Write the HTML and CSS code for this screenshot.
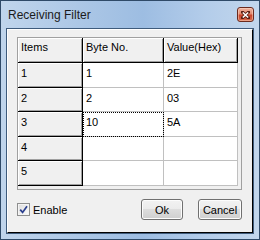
FILE: index.html
```html
<!DOCTYPE html>
<html lang="en">
<head>
    <meta charset="UTF-8">
    <title>Receiving Filter</title>
    <link rel="stylesheet" href="styles.css">
</head>
<body>
    <div class="window">
        <div class="title-bar">
            <span class="title">Receiving Filter</span>
            <div class="close-btn">
                <svg width="9" height="8" viewBox="0 0 9 8">
                    <path d="M1.5 1.2 L7.5 6.8 M7.5 1.2 L1.5 6.8" stroke="#5a1d10" stroke-width="3.2" stroke-linecap="square"/>
                    <path d="M1.8 1.5 L7.2 6.5 M7.2 1.5 L1.8 6.5" stroke="#fff" stroke-width="1.6"/>
                </svg>
            </div>
        </div>
        <div class="client-edge">
            <div class="client">
                <div class="grid-box">
                    <div class="grid">
                        <div class="cell head">Items</div>
                        <div class="cell head">Byte No.</div>
                        <div class="cell head">Value(Hex)</div>

                        <div class="cell row-head">1</div>
                        <div class="cell data">1</div>
                        <div class="cell data">2E</div>

                        <div class="cell row-head">2</div>
                        <div class="cell data">2</div>
                        <div class="cell data">03</div>

                        <div class="cell row-head">3</div>
                        <div class="cell data focused">10</div>
                        <div class="cell data">5A</div>

                        <div class="cell row-head">4</div>
                        <div class="cell data"></div>
                        <div class="cell data"></div>

                        <div class="cell row-head">5</div>
                        <div class="cell data"></div>
                        <div class="cell data"></div>
                    </div>
                </div>
                <div class="bottom-row">
                    <label class="check">
                        <span class="check-box">
                            <svg width="9" height="9" viewBox="0 0 9 9">
                                <path d="M1.2 4.6 L3.6 7.4 L8 1.2" fill="none" stroke="#2b3f8e" stroke-width="1.7"/>
                            </svg>
                        </span>
                        Enable
                    </label>
                    <div class="buttons">
                        <div class="btn ok">Ok</div>
                        <div class="btn cancel">Cancel</div>
                    </div>
                </div>
            </div>
        </div>
    </div>
</body>
</html>
```

FILE: styles.css
```css
body {
    margin: 0;
    padding: 0;
    font-family: "Liberation Sans", Arial, sans-serif;
    font-size: 11px;
    color: #000;
}

.window {
    width: 260px;
    height: 240px;
    box-sizing: border-box;
    border: 1px solid #2f4a68;
    padding: 0 5px 5px 5px;
    display: flex;
    flex-direction: column;
    background: linear-gradient(to right, #c0d5ec 0%, #a9c5e5 35%, #9dbde2 55%, #b4cdea 80%, #c2d6ec 100%);
}

.title-bar {
    height: 27px;
    display: flex;
    align-items: flex-start;
    justify-content: space-between;
}

.title {
    font-size: 12px;
    color: #1b1b1b;
    margin: 7px 0 0 2px;
}

.close-btn {
    width: 17px;
    height: 15px;
    box-sizing: border-box;
    margin-top: 6px;
    border: 1px solid #6b2a1e;
    border-radius: 3px;
    background: linear-gradient(#eeb3a0 0%, #e38a6f 45%, #c9432a 55%, #d76a4c 100%);
    box-shadow: inset 0 0 0 1px rgba(255, 220, 200, 0.5);
    display: flex;
    align-items: center;
    justify-content: center;
}

.client-edge {
    flex: 1;
    border: 1px solid #3e5b7c;
}

.client {
    height: 100%;
    box-sizing: border-box;
    border: 1px solid;
    border-color: #fff #000 #000 #fff;
    background: #f0f0f0;
    padding: 7px 10px 0 9px;
}

.grid-box {
    height: 153px;
    box-sizing: border-box;
    border: 1px solid #a0a0a0;
    background: #f0f0f0;
}

.grid {
    display: grid;
    grid-template-columns: 65px 81px 74px;
    grid-template-rows: 25px 25px 24px 25px 24px 25px;
}

.cell {
    box-sizing: border-box;
    border-right: 1px solid #c0c0c0;
    border-bottom: 1px solid #c0c0c0;
    padding: 4px 0 0 3px;
    white-space: nowrap;
}

.head,
.row-head {
    background: #f0f0f0;
    border-right-color: #000;
    border-bottom-color: #000;
    box-shadow: inset 1px 1px #fff, inset -1px -1px #a0a0a0;
}

.head {
    padding-top: 3px;
}

.data {
    background: #fff;
    padding-left: 3px;
}

.focused {
    outline: 1px dotted #000;
    outline-offset: -1px;
}

.bottom-row {
    margin-top: 9px;
    height: 21px;
    display: flex;
    align-items: center;
    justify-content: space-between;
}

.check {
    display: flex;
    align-items: center;
    gap: 3px;
}

.check-box {
    width: 13px;
    height: 13px;
    box-sizing: border-box;
    border: 1px solid #8e8f8f;
    background: linear-gradient(135deg, #dcdcdc, #fdfdfd);
    box-shadow: inset 0 0 0 1px #f4f4f4;
    display: flex;
    align-items: center;
    justify-content: center;
}

.buttons {
    display: flex;
    gap: 15px;
}

.btn {
    height: 21px;
    box-sizing: border-box;
    border: 1px solid #707070;
    border-radius: 3px;
    background: linear-gradient(#f2f2f2 0%, #ebebeb 50%, #dddddd 50%, #cfcfcf 100%);
    box-shadow: inset 0 0 0 1px #fcfcfc;
    display: flex;
    align-items: center;
    justify-content: center;
}

.ok {
    width: 42px;
}

.cancel {
    width: 44px;
}
```
